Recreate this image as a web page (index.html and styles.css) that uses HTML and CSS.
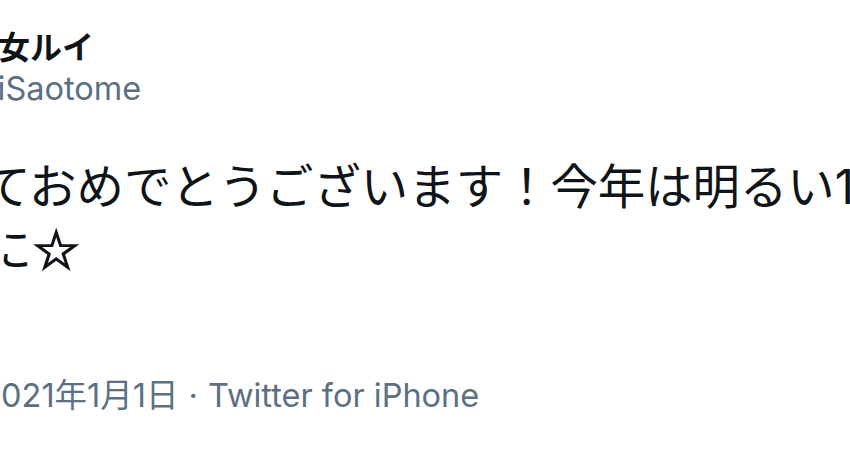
FILE: index.html
```html
<!DOCTYPE html>
<html lang="ja">
<head>
<meta charset="utf-8">
<title>Tweet</title>
<link rel="stylesheet" href="styles.css">
</head>
<body>
<article class="tweet">
  <header class="author">
    <div class="avatar"></div>
    <div class="names">
      <span class="display-name">早乙女ルイ</span>
      <span class="handle">@RuiSaotome</span>
    </div>
  </header>
  <p class="text">明けましておめでとうございます！今年は明るい1年になりますように<span class="star">☆</span></p>
  <div class="meta"><span class="time">午前0:00</span><span class="sep">·</span><span class="date">2021年1月1日</span><span class="sep">·</span><span class="source">Twitter for iPhone</span></div>
</article>
</body>
</html>
```
FILE: styles.css
```css
html, body {
  margin: 0;
  padding: 0;
  background: #ffffff;
  overflow: hidden;
  width: 850px;
  height: 450px;
}
.tweet {
  margin-left: -205px;
  width: 1400px;
  font-family: "Inter", "Noto Sans CJK JP", sans-serif;
  color: #0f1419;
}
.author {
  display: flex;
  align-items: center;
  gap: 20px;
  padding-top: 17px;
}
.avatar {
  width: 98px;
  height: 98px;
  border-radius: 50%;
  flex: none;
}
.names {
  display: flex;
  flex-direction: column;
  margin-left: 10px;
}
.display-name {
  font-family: "Noto Sans CJK JP", sans-serif;
  font-weight: 700;
  font-size: 32px;
  line-height: 46px;
  margin-left: 11px;
}
.handle {
  font-size: 32.5px;
  line-height: 42px;
  color: #5b7083;
  margin-left: 3px;
}
.text {
  font-family: "Inter", "Noto Sans CJK JP", sans-serif;
  font-size: 47.4px;
  line-height: 63px;
  margin: 40px 0 0;
  width: 1275px;
}
.star {
  font-family: "DejaVu Sans", sans-serif;
  font-size: 54px;
  line-height: 0;
  vertical-align: -2px;
  -webkit-text-stroke: 1.6px #0f1419;
}
.meta {
  margin-top: 95px;
  font-size: 32.5px;
  line-height: 40px;
  color: #5b7083;
  display: flex;
  gap: 10px;
  margin-left: 21px;
}
```
